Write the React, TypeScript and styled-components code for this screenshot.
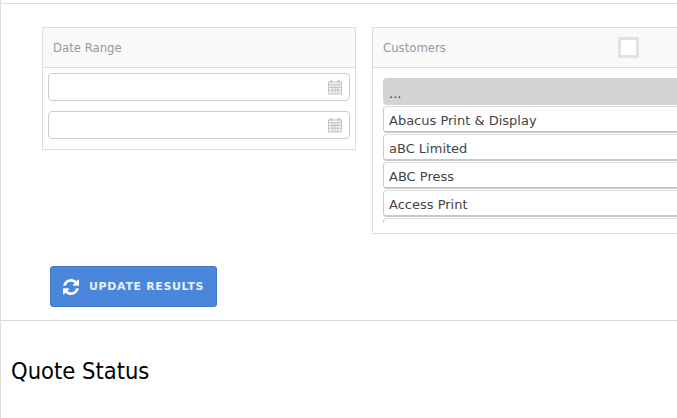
import React from "react";
import styled, { createGlobalStyle } from "styled-components";

const GlobalStyle = createGlobalStyle`
  html, body {
    margin: 0;
    padding: 0;
    background: #fff;
    overflow: hidden;
  }
`;

const Page = styled.div`
  width: 677px;
  height: 418px;
  box-sizing: border-box;
  overflow: hidden;
  background: #fff;
  border-left: 1px solid #ddd;
  font-family: "DejaVu Sans", Verdana, sans-serif;
`;

const FilterArea = styled.div`
  height: 318px;
  margin-top: 3px;
  box-sizing: border-box;
  border-top: 1px solid #ddd;
  border-bottom: 1px solid #d8d8d8;
  padding: 23px 0 0 41px;
`;

const PanelRow = styled.div`
  display: flex;
  align-items: flex-start;
  gap: 16px;
  width: 800px;
`;

const Panel = styled.section<{ $width: number; $height: number }>`
  width: ${({ $width }) => $width}px;
  height: ${({ $height }) => $height}px;
  flex: none;
  box-sizing: border-box;
  border: 1px solid #ddd;
  overflow: hidden;
`;

const PanelHeader = styled.header`
  height: 40px;
  box-sizing: border-box;
  background: #f9f9f9;
  border-bottom: 1px solid #ddd;
  display: flex;
  align-items: center;
  padding-left: 10px;
`;

const PanelTitle = styled.h3<{ $grow?: boolean }>`
  margin: 0;
  width: ${({ $grow }) => ($grow ? "235px" : "auto")};
  font-size: 11.7px;
  font-weight: 400;
  color: #999;
`;

const SelectAll = styled.span`
  width: 21px;
  height: 21px;
  box-sizing: border-box;
  border: 3px solid #e2e2e2;
  background: #fff;
`;

const DateFields = styled.div`
  display: flex;
  flex-direction: column;
  gap: 10px;
  padding: 5px 5px 0;
`;

const DateField = styled.div`
  height: 28px;
  box-sizing: border-box;
  border: 1px solid #ccc;
  border-radius: 4px;
  background: #fff;
  display: flex;
  align-items: center;
  justify-content: flex-end;
  padding-right: 7px;
`;

const CustomerList = styled.ul`
  list-style: none;
  margin: 10px 0 0 10px;
  padding: 0;
  height: 145px;
  overflow: hidden;
  display: flex;
  flex-direction: column;
  gap: 1px;
`;

const CustomerItem = styled.li<{ $active?: boolean }>`
  height: 27px;
  flex: none;
  box-sizing: border-box;
  padding: ${({ $active }) => ($active ? "4px" : "2px")} 0 0 5px;
  display: flex;
  align-items: center;
  font-size: 13px;
  color: ${({ $active }) => ($active ? "#333" : "#444")};
  background: ${({ $active }) => ($active ? "#d3d3d3" : "#fff")};
  border-radius: 4px 0 0 4px;
  border-left: 1px solid ${({ $active }) => ($active ? "#d3d3d3" : "#ccc")};
  border-top: 1px solid ${({ $active }) => ($active ? "#d3d3d3" : "#ddd")};
  border-bottom: 2px solid ${({ $active }) => ($active ? "#d3d3d3" : "#c8c8c8")};
`;

const UpdateButton = styled.button`
  margin: 32px 0 0 8px;
  width: 167px;
  height: 41px;
  box-sizing: border-box;
  display: flex;
  align-items: center;
  gap: 10px;
  padding: 0 0 0 12px;
  background: #4a86dc;
  border: 1px solid #3f78c9;
  border-radius: 3px;
  color: #e8f0fb;
  font-family: inherit;
  font-size: 11px;
  font-weight: 700;
  letter-spacing: 0.65px;
`;

const SectionTitle = styled.h2`
  margin: 36px 0 0 10px;
  font-size: 23.5px;
  line-height: 28px;
  font-weight: 400;
  color: #000;
  font-stretch: condensed;
`;

const CalendarIcon = () => (
  <svg width="14" height="16" viewBox="0 0 15 16" fill="none" stroke="#c2c2c2" strokeWidth="1">
    <rect x="0.5" y="2.5" width="14" height="13" fill="#f4f4f4" />
    <path d="M0.5 5.5h14M0.5 8.5h14M0.5 11.5h14M4.5 5.5v10M7.5 5.5v10M10.5 5.5v10" />
    <path d="M3.5 0.5v3M11.5 0.5v3" strokeWidth="2" />
  </svg>
);

const RefreshIcon = () => (
  <svg width="16" height="16" viewBox="0 0 1536 1536" fill="#fff">
    <path d="M1511 928q0 5-1 7-64 268-268 434.5T764 1536q-146 0-282.5-55T238 1324l-129 129q-19 19-45 19t-45-19-19-45V960q0-26 19-45t45-19h448q26 0 45 19t19 45-19 45l-137 137q71 66 161 102t187 36q134 0 250-65t186-179q11-17 53-117 8-23 30-23h192q13 0 22.500 9.500t9.500 22.500zm25-800v448q0 26-19 45t-45 19h-448q-26 0-45-19t-19-45 19-45l138-138Q969 256 768 256q-134 0-250 65T332 500q-11 17-53 117-8 23-30 23H50q-13 0-22.500-9.500T18 608v-7q65-268 270-434.500T768 0q146 0 284 55.500T1297 212l130-129q19-19 45-19t45 19 19 45z" />
  </svg>
);

const customers = ["...", "Abacus Print & Display", "aBC Limited", "ABC Press", "Access Print", ""];

export default function App() {
  return (
    <Page>
      <GlobalStyle />
      <FilterArea>
        <PanelRow>
          <Panel $width={314} $height={123}>
            <PanelHeader>
              <PanelTitle>Date Range</PanelTitle>
            </PanelHeader>
            <DateFields>
              <DateField>
                <CalendarIcon />
              </DateField>
              <DateField>
                <CalendarIcon />
              </DateField>
            </DateFields>
          </Panel>
          <Panel $width={400} $height={207}>
            <PanelHeader>
              <PanelTitle $grow>Customers</PanelTitle>
              <SelectAll />
            </PanelHeader>
            <CustomerList>
              {customers.map((name, i) => (
                <CustomerItem key={i} $active={i === 0}>
                  {name}
                </CustomerItem>
              ))}
            </CustomerList>
          </Panel>
        </PanelRow>
        <UpdateButton>
          <RefreshIcon />
          UPDATE RESULTS
        </UpdateButton>
      </FilterArea>
      <SectionTitle>Quote Status</SectionTitle>
    </Page>
  );
}
